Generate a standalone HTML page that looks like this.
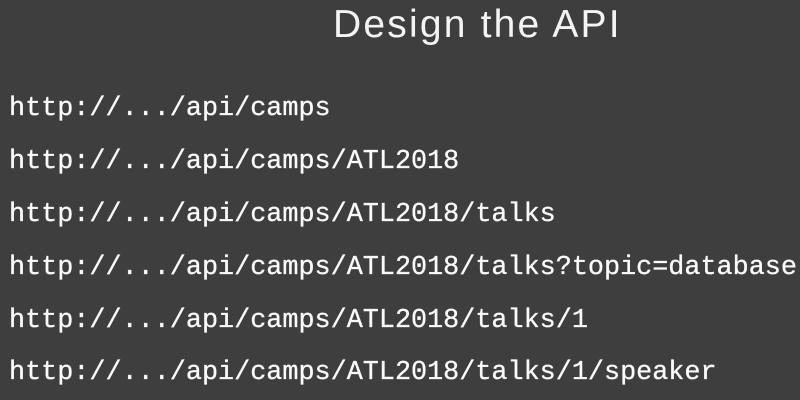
<!DOCTYPE html>
<html><head><meta charset="utf-8"><style>
html,body{margin:0;padding:0;}
body{width:800px;height:400px;background:#3e3e3e;position:relative;overflow:hidden;color:#fff;}
.t{position:absolute;left:333px;top:0px;font-family:"Liberation Sans",sans-serif;font-size:39px;line-height:50px;letter-spacing:2.2px;color:#f4f4f4;white-space:nowrap;font-weight:normal;}
.l{position:absolute;left:9px;font-family:"Liberation Mono",monospace;font-size:26.8px;line-height:30px;white-space:nowrap;color:#fafafa;-webkit-text-stroke:0.3px #fafafa;}
</style></head><body>
<div class="t">Design the API</div>
<div class="l" style="top:94px">http://.../api/camps</div>
<div class="l" style="top:147px">http://.../api/camps/ATL2018</div>
<div class="l" style="top:200px">http://.../api/camps/ATL2018/talks</div>
<div class="l" style="top:253px">http://.../api/camps/ATL2018/talks?topic=database</div>
<div class="l" style="top:306px">http://.../api/camps/ATL2018/talks/1</div>
<div class="l" style="top:358px">http://.../api/camps/ATL2018/talks/1/speaker</div>
</body></html>
